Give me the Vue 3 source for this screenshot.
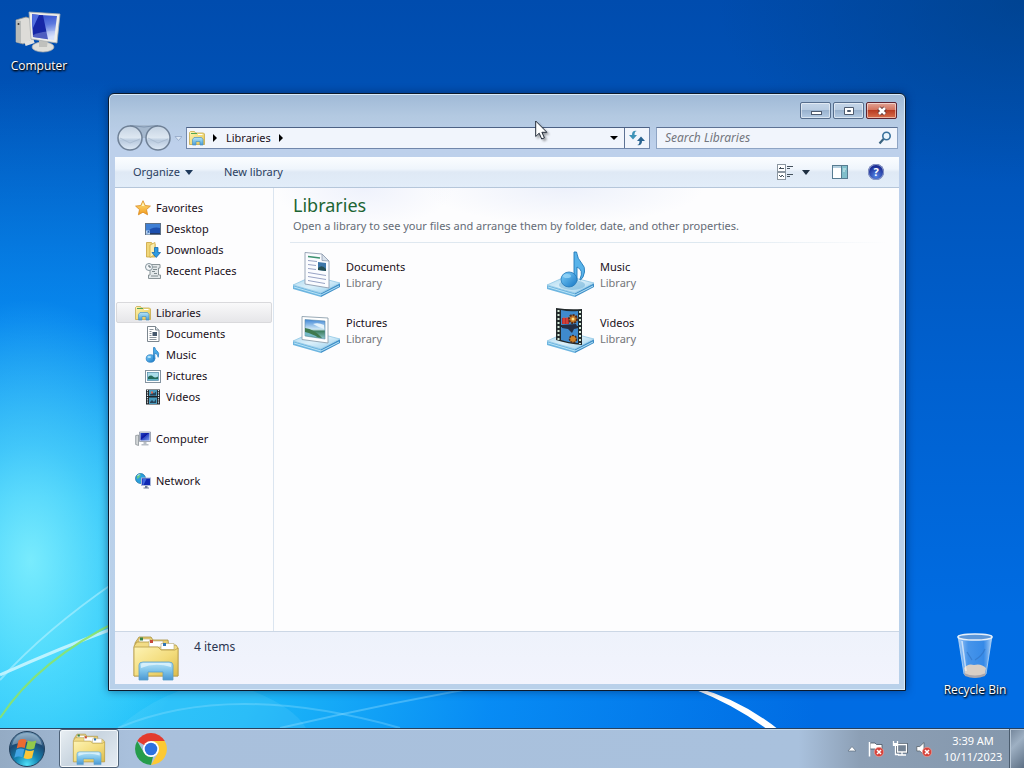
<script setup>
import { ref } from 'vue'

const search = ref('')

const groups = [
  {
    title: 'Favorites',
    icon: 'star',
    items: [
      { name: 'Desktop', icon: 'desktop' },
      { name: 'Downloads', icon: 'downloads' },
      { name: 'Recent Places', icon: 'recent' }
    ]
  },
  {
    title: 'Libraries',
    icon: 'folder',
    active: true,
    items: [
      { name: 'Documents', icon: 'document' },
      { name: 'Music', icon: 'note' },
      { name: 'Pictures', icon: 'picture' },
      { name: 'Videos', icon: 'film' }
    ]
  },
  { title: 'Computer', icon: 'computer', items: [] },
  { title: 'Network', icon: 'network', items: [] }
]

const libraries = [
  { name: 'Documents', icon: 'lib-documents' },
  { name: 'Music', icon: 'lib-music' },
  { name: 'Pictures', icon: 'lib-pictures' },
  { name: 'Videos', icon: 'lib-videos' }
]
</script>

<template>
  <div class="desktop">
    <!-- shared icon shapes -->
    <svg class="sprite" aria-hidden="true">
      <defs>
        <linearGradient id="gFolder" x1="0" y1="0" x2="1" y2="1">
          <stop offset="0" stop-color="#fdf3b4" />
          <stop offset="0.55" stop-color="#f3dc7c" />
          <stop offset="1" stop-color="#dcbb4c" />
        </linearGradient>
        <linearGradient id="gStand" x1="0" y1="0" x2="0" y2="1">
          <stop offset="0" stop-color="#b9e3f6" />
          <stop offset="0.5" stop-color="#7cc3ea" />
          <stop offset="1" stop-color="#4a97d2" />
        </linearGradient>
        <linearGradient id="gScreen" x1="0" y1="0" x2="1" y2="1">
          <stop offset="0" stop-color="#2448c8" />
          <stop offset="0.45" stop-color="#0d17a0" />
          <stop offset="0.5" stop-color="#2c48c4" />
          <stop offset="1" stop-color="#7f9cee" />
        </linearGradient>
        <linearGradient id="gPanel" x1="0" y1="0" x2="0.2" y2="1">
          <stop offset="0" stop-color="#2a48cc" />
          <stop offset="0.5" stop-color="#5b78de" />
          <stop offset="1" stop-color="#d9e3fc" />
        </linearGradient>
        <linearGradient id="gNote" x1="0" y1="0" x2="1" y2="1">
          <stop offset="0" stop-color="#7fd0fa" />
          <stop offset="1" stop-color="#1676c4" />
        </linearGradient>
        <linearGradient id="gTray" x1="0" y1="0" x2="1" y2="1">
          <stop offset="0" stop-color="#a5d5ee" />
          <stop offset="0.5" stop-color="#dcf0fa" />
          <stop offset="1" stop-color="#8fcbec" />
        </linearGradient>
        <linearGradient id="gSky" x1="0" y1="0" x2="0" y2="1">
          <stop offset="0" stop-color="#3f86d6" />
          <stop offset="0.5" stop-color="#cfe8f6" />
          <stop offset="0.6" stop-color="#3e8060" />
          <stop offset="1" stop-color="#8ec6ce" />
        </linearGradient>
        <linearGradient id="gStar" x1="0" y1="0" x2="0" y2="1">
          <stop offset="0" stop-color="#ffe884" />
          <stop offset="1" stop-color="#f29a1c" />
        </linearGradient>
        <linearGradient id="gBall" x1="0" y1="0" x2="0" y2="1">
          <stop offset="0" stop-color="#c4d2e2" />
          <stop offset="0.48" stop-color="#dde7f1" />
          <stop offset="0.6" stop-color="#b9cade" />
          <stop offset="1" stop-color="#dfeaf6" />
        </linearGradient>
        <radialGradient id="gOrb" cx="0.5" cy="0.95" r="0.95">
          <stop offset="0" stop-color="#4fe0f8" />
          <stop offset="0.35" stop-color="#1587b4" />
          <stop offset="0.7" stop-color="#1c4a74" />
          <stop offset="1" stop-color="#6f98b8" />
        </radialGradient>
        <linearGradient id="gBin" x1="0" y1="0" x2="1" y2="0">
          <stop offset="0" stop-color="#d8eaff" stop-opacity="0.8" />
          <stop offset="0.3" stop-color="#8dbdf2" stop-opacity="0.5" />
          <stop offset="0.75" stop-color="#6ca8ec" stop-opacity="0.5" />
          <stop offset="1" stop-color="#e0f0ff" stop-opacity="0.8" />
        </linearGradient>
      </defs>

      <symbol id="star" viewBox="0 0 16 16">
        <path d="M8 .7l2.200 4.800 5.200.6-3.900 3.500 1.100 5.200L8 12.200l-4.600 2.600 1.100-5.200L.6 6.100l5.200-.6z" fill="url(#gStar)" stroke="#d98a20" stroke-width=".8" />
        <path d="M8 2.500l1.500 3.600-3 0z" fill="#fff6c0" />
      </symbol>
      <symbol id="desktop" viewBox="0 0 16 16">
        <rect x=".5" y="2.500" width="15" height="11" fill="#1c4fae" stroke="#5f7186" />
        <path d="M1 3h14v4Q7 5 1 12z" fill="#3f7fd4" />
        <path d="M1 12.500h14" stroke="#243a66" />
        <path d="M1 13.500v-4h4v4z" fill="#b9d4f3" />
        <path d="M2 12.500l2-2m-1.500 0h1.500v1.500" stroke="#2458a6" fill="none" stroke-width=".8" />
      </symbol>
      <symbol id="downloads" viewBox="0 0 16 16">
        <path d="M1.500.5h5l1 1.500h2.500v13h-8.500z" fill="#f1d77a" stroke="#c9a23c" stroke-width=".8" />
        <path d="M5 3l5-2.500v12l-5 3z" fill="#fbeeb0" stroke="#cfab45" stroke-width=".8" />
        <path d="M9.500 5.500h3.500v5h2.500l-4.300 5-4.200-5h2.500z" fill="#2d9be2" stroke="#1769ae" stroke-width=".8" />
      </symbol>
      <symbol id="recent" viewBox="0 0 16 16">
        <path d="M5 1.500h10v3.500h-1.500v7h2v3.500H3.500V12H5V7" fill="#e3e8ea" stroke="#8a9498" />
        <path d="M8 4h4M8 6.500h4M7 8.500h3M9 10.500h3M6 13h7" stroke="#7e8a8e" />
        <circle cx="4" cy="4" r="3.500" fill="#f4f7f9" stroke="#84949c" />
        <path d="M4 2v2h2" stroke="#56666e" fill="none" />
      </symbol>
      <symbol id="folder" viewBox="0 0 16 16">
        <path d="M.5 2.500l1-1h4l1 1.500h8l1 1v10.500H.5z" fill="url(#gFolder)" stroke="#c8ab4c" stroke-width=".8" />
        <path d="M2 3.500h6" stroke="#52a552" />
        <path d="M9 4.500h4.500" stroke="#fff" />
        <path d="M3.500 15V9.500l1.500-2h7.500l1.500 2V15h-3v-3.500h-4V15z" fill="url(#gStand)" stroke="#4a93c4" stroke-width=".7" />
      </symbol>
      <symbol id="document" viewBox="0 0 16 16">
        <path d="M2.500.5h8l3.500 3.500v11.500h-11.500z" fill="#fff" stroke="#7c868f" />
        <path d="M10.500.5v3.500H14" fill="#dce3e8" stroke="#7c868f" />
        <path d="M4.500 3.500h4M4.500 5.500h2M4.500 7.500h2M4.500 9.500h2M4.500 11.500h7M4.500 13.500h7" stroke="#8a939b" />
        <rect x="7.500" y="6" width="4.500" height="4" fill="#46586c" />
      </symbol>
      <symbol id="note" viewBox="0 0 16 16">
        <ellipse cx="5.500" cy="11.500" rx="4.300" ry="3.800" fill="url(#gNote)" stroke="#1f77bd" stroke-width=".7" />
        <path d="M8.500.5h1.300q.4 2.300 2.600 3.800t.8 6q-.2-3.300-3.400-4.300v6H8.500z" fill="#48a9e6" stroke="#1f77bd" stroke-width=".7" />
        <ellipse cx="4.300" cy="10" rx="1.700" ry="1" fill="#b6e5fc" />
      </symbol>
      <symbol id="picture" viewBox="0 0 16 16">
        <rect x=".5" y="2.500" width="15" height="12" fill="#fff" stroke="#8493a0" />
        <rect x="2.500" y="4.500" width="11" height="8" fill="#a9dcea" stroke="#4f86a5" stroke-width=".7" />
        <path d="M3 9q3-2.500 5-.5t5 0v3.500H3z" fill="#236a5b" />
        <path d="M3 11h10v1H3z" fill="#5fb2c4" />
      </symbol>
      <symbol id="film" viewBox="0 0 16 16">
        <rect x="1" y=".5" width="14" height="15" fill="#1c2227" />
        <path d="M2.500 1v14M13.500 1v14" stroke="#e3eaee" stroke-width="1.200" stroke-dasharray="1.300 1" />
        <path d="M4 1h8v6H4zM4 8.500h8V15H4z" fill="#4a9bbd" />
        <path d="M5 5.500l3-2 1 1 2-2v4H5zM5 13l2-2 2 2 2-3v4H5z" fill="#27445a" />
        <path d="M6 2.500h2v2H6z" fill="#d96a54" />
      </symbol>
      <symbol id="computer" viewBox="0 0 16 16">
        <path d="M.7 4.500l2.800-.5v10.500l-2.800-1z" fill="#d5d8da" stroke="#7d858b" stroke-width=".7" />
        <path d="M4.500 1h11v9.500h-11z" fill="#dfe5ee" stroke="#8d96a6" stroke-width=".8" />
        <path d="M5.500 2h9v7.500h-9z" fill="url(#gScreen)" />
        <path d="M8.500 11h3v2h2v1.500h-7V13h2z" fill="#b9bfc6" />
      </symbol>
      <symbol id="network" viewBox="0 0 16 16">
        <circle cx="5.500" cy="5.500" r="5" fill="#2ba0dd" stroke="#1b6f9d" stroke-width=".7" />
        <path d="M2 3q2-2 4-1.500l-1 2-1 1.500-2 1zM6.500 5l3 1-2 3-2-1z" fill="#63c98a" />
        <path d="M2.500 2.500l2-1" stroke="#d5f4ff" />
        <rect x="6.500" y="5" width="9" height="7.500" fill="#0e27b2" stroke="#a9b7d8" />
        <path d="M7.500 6h4l-3 6h-1z" fill="#3e67e0" />
        <path d="M10 13h2.500v1.500H14v1H8.500v-1H10z" fill="#6e7c97" />
      </symbol>

      <symbol id="tray-base" viewBox="0 0 48 48">
        <path d="M0 34l28 8v4L0 38z" fill="#6db5e0" />
        <path d="M28 42l19-10v4L28 46z" fill="#3f8fc8" />
        <path d="M0 34l20-9 27 7-19 10z" fill="url(#gTray)" stroke="#8fc6e4" stroke-width=".8" />
        <path d="M1 36l27 8 18-9" fill="none" stroke="#b9e4f7" />
      </symbol>
      <symbol id="lib-documents" viewBox="0 0 48 48">
        <use href="#tray-base" width="48" height="48" />
        <path d="M12 1.500l17 1.500 7 7v27l-24-4z" fill="#fbfcff" stroke="#8f9db0" stroke-width=".9" />
        <path d="M29 3v6.500l7 .5z" fill="#d9e2ec" stroke="#8f9db0" stroke-width=".8" />
        <path d="M15 5.500l12 1.500" stroke="#3d9270" stroke-width="1.600" />
        <path d="M15 9.500l9 1M15 13.500l8 1M15 17.500l8 1M15 21.500l18 3M15 25.500l18 3M15 29.500l17 3" stroke="#98a3c5" />
        <path d="M25 11l8 1v8l-8-1z" fill="#3e77a9" />
        <path d="M25 17q4-4 8 1v2l-8-1z" fill="#254f53" />
      </symbol>
      <symbol id="lib-music" viewBox="0 0 48 48">
        <use href="#tray-base" width="48" height="48" />
        <ellipse cx="25" cy="34" rx="13" ry="5" fill="#6aaed6" opacity=".5" />
        <path d="M27 1h2.500q1 7 5 11t3 9q-1 6-4 8-1 0-.5-1 4-9-3-12v14h-3z" fill="#58b3ea" stroke="#2379b9" stroke-width=".9" />
        <ellipse cx="22" cy="28.500" rx="8" ry="7.500" fill="url(#gNote)" stroke="#2377b7" stroke-width=".8" />
        <ellipse cx="20" cy="25" rx="4" ry="2" fill="#a2dbfa" opacity=".7" />
      </symbol>
      <symbol id="lib-pictures" viewBox="0 0 48 48">
        <use href="#tray-base" width="48" height="48" />
        <path d="M9 9.500l26 1.500v25l-26-3.500z" fill="#fff" stroke="#8fa0ae" stroke-width=".9" />
        <path d="M12 12.500l20 1.500v18l-20-3z" fill="url(#gSky)" stroke="#5d8ba7" stroke-width=".6" />
        <path d="M12 21q9 1 17 10l-8-1-9-2z" fill="#3e794d" />
        <path d="M12 25q8 2 13 5.500l-13-2z" fill="#75bac9" />
        <path d="M20 17q5-2 11 1v4q-6-2-11-5z" fill="#e5f3fb" />
      </symbol>
      <symbol id="lib-videos" viewBox="0 0 48 48">
        <use href="#tray-base" width="48" height="48" />
        <path d="M9 1q13 2 26 1v36q-14-1-26-5z" fill="#22292b" />
        <path d="M11.500 3v30M33 4v33" stroke="#d4ead8" stroke-width="2" stroke-dasharray="2 2" />
        <path d="M14 3q8 2 17 1v15q-9 1-17-1zM14 20q8 2 17 1v15q-9 0-17-3z" fill="#3f8ace" />
        <path d="M15 11h7v6h-7z" fill="#b92c30" />
        <path d="M17 10v7M20 10v7" stroke="#e5543f" />
        <circle cx="26" cy="12" r="4" fill="#c27626" stroke="#542c1b" stroke-width="2" stroke-dasharray="2 1" />
        <circle cx="26" cy="12" r="1.500" fill="#ffe086" />
        <path d="M15 18l14-1 2 4-4 1-2 4-4-4-6-1z" fill="#242d43" />
        <circle cx="26" cy="32" r="3.500" fill="#ce8126" stroke="#4c2c1c" stroke-width="1.500" stroke-dasharray="2 1" />
      </symbol>

      <symbol id="folder-big" viewBox="0 0 48 48">
        <path d="M3 9l4-6h12l2 3h15l1 7H3z" fill="#e9ce70" stroke="#a68f42" stroke-width=".8" />
        <path d="M7 5h11v5H7z" fill="#fff" stroke="#b4a876" stroke-width=".6" />
        <rect x="8" y="3.500" width="3" height="3" fill="#378548" />
        <path d="M2 12l3-4h13l2 3h24l2 3v28H2z" fill="#f2dc85" stroke="#b19745" stroke-width=".8" />
        <path d="M17 7h14v6H17z" fill="#fff" stroke="#b4a876" stroke-width=".6" />
        <rect x="18" y="6" width="3" height="3" fill="#c6493a" />
        <path d="M29 9.500h13v6H29z" fill="#fff" stroke="#b4a876" stroke-width=".6" />
        <rect x="31" y="9" width="3" height="3" fill="#2f75b4" />
        <path d="M2 13h24l3 3h14l3-2v28H2z" fill="url(#gFolder)" stroke="#b89d46" stroke-width=".8" />
        <path d="M7 46V31q0-3 4-3h26q4 0 4 3v15H31v-8H16v8z" fill="url(#gStand)" stroke="#5b9fc9" stroke-width=".8" />
        <path d="M9 34q14-6 30-1v-2q0-2-2-2H11q-2 0-2 2z" fill="#dff4fc" opacity=".8" />
      </symbol>
      <symbol id="pc-big" viewBox="0 0 48 44">
        <path d="M1 10l10-3 6 2v21l-9 4-7-2z" fill="#dddcd8" stroke="#8d918f" stroke-width=".8" />
        <path d="M1 10l5 1v22l-5-1z" fill="#b8bbb9" />
        <circle cx="3.500" cy="14" r="1" fill="#333" />
        <path d="M10 34l9-3" stroke="#e1e1df" stroke-width="4" />
        <ellipse cx="28" cy="37" rx="11" ry="5" fill="#dfdfda" stroke="#aaa" stroke-width=".7" />
        <path d="M24 29h9l-1 8h-8z" fill="#c0c1bd" />
        <path d="M14 2l31 2-3 29-26-4z" fill="#eeeeeb" stroke="#a8adaf" stroke-width=".8" />
        <path d="M17 4.500l25 1.500-3 24-21-3z" fill="url(#gPanel)" />
        <path d="M17 4.500l11 .7 5 24-15-2.200z" fill="#1526a6" />
        <path d="M17 4.500l7 .4-6.500 14z" fill="#526fe0" />
        <path d="M18 25q9-4 22-4l-1 9-21-3z" fill="#d7e1fc" opacity=".3" />
      </symbol>
      <symbol id="bin" viewBox="0 0 40 48">
        <path d="M3 4h34l-6 38q-11 6-22 0z" fill="url(#gBin)" stroke="#b5d5f5" stroke-width=".8" />
        <path d="M9 36q4-5 10-3 7-2 12 3l-1 6q-10 5-20 0z" fill="#d9cfc5" />
        <path d="M9 41q11 5 22 0l-1 3q-10 4-20 0z" fill="#a9a6ad" />
        <path d="M30 17q-3 7-10 11M12 20l5 8" fill="none" stroke="#2f6fc0" stroke-width="1.200" opacity=".6" />
        <ellipse cx="20" cy="5" rx="17" ry="3" fill="#5c97d9" stroke="#e6f0fa" stroke-width="1.500" />
        <path d="M7 9l4 30" stroke="#fff" stroke-width="1.500" opacity=".6" />
      </symbol>
    </svg>

    <!-- wallpaper light streaks -->
    <svg class="streaks" viewBox="0 0 1024 768" preserveAspectRatio="none" aria-hidden="true">
      <path d="M0 675Q60 648 120 626" stroke="#e0fbff" stroke-width="3" opacity=".75" fill="none" />
      <path d="M0 680Q45 630 115 582" stroke="#c6f6ff" stroke-width="2" opacity=".5" fill="none" />
      <path d="M0 718Q38 660 120 620" stroke="#8be36c" stroke-width="2" opacity=".9" fill="none" />
      <path d="M118 728Q230 680 400 728" stroke="#9fe6ff" stroke-width="2" opacity=".3" fill="none" />
      <path d="M280 728Q400 700 520 680" stroke="#8fdcff" stroke-width="2" opacity=".4" fill="none" />
      <path d="M118 728Q160 690 220 680Q290 700 306 728z" fill="#9feaff" opacity=".12" />
      <path d="M694 688Q740 700 780 732L772 732Q740 706 694 688z" fill="#fff" stroke="#fff" stroke-width="2" />
    </svg>

    <button class="shortcut shortcut-pc" type="button">
      <svg class="shortcut-pc-icon"><use href="#pc-big" /></svg>
      <span>Computer</span>
    </button>
    <button class="shortcut shortcut-bin" type="button">
      <svg class="shortcut-bin-icon"><use href="#bin" /></svg>
      <span>Recycle Bin</span>
    </button>

    <main class="window">
      <div class="titlebar">
        <button class="win-btn" type="button" aria-label="Minimize">
          <svg width="14" height="12" viewBox="0 0 14 12"><rect x="2.500" y="6.500" width="10" height="3" fill="#fff" stroke="#4d5a6e" /></svg>
        </button>
        <button class="win-btn" type="button" aria-label="Maximize">
          <svg width="14" height="12" viewBox="0 0 14 12">
            <path d="M2.500 2.500h9v7h-9zM5.500 5.500v1h3v-1z" fill="#fff" fill-rule="evenodd" stroke="#4d5a6e" />
          </svg>
        </button>
        <button class="win-btn close" type="button" aria-label="Close">
          <svg width="14" height="12" viewBox="0 0 14 12">
            <path d="M4 3l6 6m0-6l-6 6" stroke="#5e3434" stroke-width="4.500" />
            <path d="M4 3l6 6m0-6l-6 6" stroke="#fff" stroke-width="2.600" />
          </svg>
        </button>
      </div>

      <div class="navrow">
        <button class="travel" type="button" aria-label="Back and forward">
          <svg width="66" height="28" viewBox="0 0 66 28">
            <path d="M14 1h28v7q-6 0-7 6h-12q0-5-9-6z" fill="#a5b8ce" />
            <path d="M14 1.500q14 3 28 0" fill="none" stroke="#8196b0" />
            <circle cx="14" cy="14" r="12" fill="url(#gBall)" stroke="#6f8096" stroke-width="1.500" />
            <circle cx="42" cy="14" r="12" fill="url(#gBall)" stroke="#6f8096" stroke-width="1.500" />
            <path d="M4 14l10 5 10-4M32 14l10 5 10-4" fill="none" stroke="#9eb1c7" opacity=".6" />
            <path d="M59 12.500h7l-3.500 4z" fill="#dbe7f5" stroke="#91a5c4" stroke-width=".8" />
          </svg>
        </button>
        <div class="address">
          <svg class="icon"><use href="#folder" /></svg>
          <svg class="crumb-arrow" width="4" height="8" viewBox="0 0 4 8"><path d="M0 0l4 4-4 4z" /></svg>
          <a class="crumb" href="#">Libraries</a>
          <svg class="crumb-arrow" width="4" height="8" viewBox="0 0 4 8"><path d="M0 0l4 4-4 4z" /></svg>
          <button class="history" type="button" aria-label="Previous locations">
            <svg width="8" height="4" viewBox="0 0 8 4"><path d="M0 0h8l-4 4z" /></svg>
          </button>
          <button class="refresh" type="button" aria-label="Refresh">
            <svg width="16" height="16" viewBox="0 0 16 16">
              <path d="M8 1Q5.500 1 5.500 5H8L4 9.500 0 5h3Q3 0 8 1z" fill="#3e93b8" />
              <path d="M8 15q2.500 0 2.500-4H8l4-4.500L16 11h-3q0 5-5 4z" fill="#2a6390" />
            </svg>
          </button>
        </div>
        <label class="search">
          <input v-model="search" type="text" placeholder="Search Libraries" aria-label="Search Libraries" />
          <svg width="14" height="14" viewBox="0 0 14 14">
            <circle cx="8.500" cy="5" r="3.700" fill="#eaf5fc" stroke="#38719c" stroke-width="1.600" />
            <path d="M5.500 8L1.500 12.500" stroke="#38627f" stroke-width="2.200" />
          </svg>
        </label>
      </div>

      <div class="commands">
        <button class="cmd" type="button">
          Organize
          <svg width="8" height="5" viewBox="0 0 8 5"><path d="M0 0h8l-4 5z" fill="#1e395b" /></svg>
        </button>
        <button class="cmd new-lib" type="button">New library</button>
        <button class="cmd views" type="button" aria-label="Change your view">
          <svg width="16" height="16" viewBox="0 0 16 16">
            <rect x=".5" y=".5" width="8" height="7" fill="#fff" stroke="#8b96a0" />
            <rect x=".5" y="8.500" width="8" height="7" fill="#fff" stroke="#8b96a0" />
            <path d="M2 4.500h5M3.500 3v2M2 11l2 2 1-2 2 2M10 2.500h6M10 4.500h3M10 10.500h6M10 12.500h3" stroke="#45525d" fill="none" />
          </svg>
        </button>
        <button class="cmd more" type="button" aria-label="More options">
          <svg width="8" height="5" viewBox="0 0 8 5"><path d="M0 0h8l-4 5z" fill="#1e2e40" /></svg>
        </button>
        <button class="cmd preview" type="button" aria-label="Show the preview pane">
          <svg width="16" height="14" viewBox="0 0 16 14">
            <rect x=".5" y=".5" width="15" height="13" fill="#fff" stroke="#577c91" />
            <path d="M1 2h9" stroke="#b4cfdf" stroke-width="2" />
            <rect x="10" y="1" width="5" height="12" fill="#80bfcb" />
            <path d="M9.500 1v12" stroke="#577c91" />
            <path d="M11 4h3M11 6h2" stroke="#d5eff2" />
          </svg>
        </button>
        <button class="cmd help" type="button" aria-label="Get help">?</button>
      </div>

      <div class="body">
        <nav class="sidebar">
          <div v-for="group in groups" :key="group.title" class="group">
            <a href="#" class="row" :class="{ active: group.active }">
              <svg class="icon"><use :href="'#' + group.icon" /></svg>
              <span>{{ group.title }}</span>
            </a>
            <a v-for="item in group.items" :key="item.name" href="#" class="row child">
              <svg class="icon"><use :href="'#' + item.icon" /></svg>
              <span>{{ item.name }}</span>
            </a>
          </div>
        </nav>

        <section class="content">
          <header class="heading">
            <h1>Libraries</h1>
            <p>Open a library to see your files and arrange them by folder, date, and other properties.</p>
          </header>
          <div class="tiles">
            <a v-for="lib in libraries" :key="lib.name" href="#" class="tile">
              <svg class="tile-icon"><use :href="'#' + lib.icon" /></svg>
              <span class="tile-text">
                <span>{{ lib.name }}</span>
                <span class="kind">Library</span>
              </span>
            </a>
          </div>
        </section>
      </div>

      <footer class="details">
        <svg class="details-icon"><use href="#folder-big" /></svg>
        <span>4 items</span>
      </footer>
    </main>

    <footer class="taskbar">
      <button class="start" type="button" aria-label="Start">
        <svg width="38" height="38" viewBox="0 0 38 38">
          <circle cx="19" cy="19" r="17.500" fill="url(#gOrb)" stroke="#23405c" />
          <path d="M4 15Q7 3 19 3t15 12q-14-6-30 0z" fill="#d8e9f3" opacity=".4" />
          <path d="M10.500 10.500q4-2.500 8-.5l-1.800 8q-4-1.800-8 .5z" fill="#ed6b32" />
          <path d="M19.800 10.600q4 2 8.500 0l-2 8q-4 2-8.300 0z" fill="#93c94b" />
          <path d="M8.300 19.800q4-2.300 8-.5l-2 8q-4-1.700-8 .5z" fill="#42a4e4" />
          <path d="M17.600 19.900q4 2 8.400 0l-2 8q-4.500 2-8.400 0z" fill="#fbc637" />
        </svg>
      </button>
      <button class="task" type="button" aria-label="Windows Explorer">
        <svg class="task-icon"><use href="#folder-big" /></svg>
      </button>
      <button class="chrome" type="button" aria-label="Google Chrome">
        <svg width="32" height="32" viewBox="0 0 32 32">
          <path d="M16 16L2.200 8A16 16 0 0 1 29.800 8z" fill="#e33b2e" />
          <path d="M16 8h13.800A16 16 0 0 1 16 32l7-12z" fill="#fcc934" />
          <path d="M2.200 8l6.900 12 6.900 4 2-.3L16 32A16 16 0 0 1 2.200 8z" fill="#259c4b" />
          <circle cx="16" cy="16" r="8" fill="#fff" />
          <circle cx="16" cy="16" r="6.300" fill="#2d71df" />
        </svg>
      </button>
      <div class="tray">
        <button class="tray-btn" type="button" aria-label="Show hidden icons">
          <svg width="16" height="16" viewBox="0 0 16 16"><path d="M4 10l4-4.500 4 4.500z" fill="#fff" stroke="#5d6d7e" stroke-width=".7" /></svg>
        </button>
        <button class="tray-btn" type="button" aria-label="Action Center">
          <svg width="16" height="16" viewBox="0 0 16 16">
            <path d="M2 2h5l1.500 1.500H14v6H8.500L7 8H2z" fill="#fff" stroke="#47535f" stroke-width=".8" />
            <path d="M1.500 1v14.500" stroke="#fff" stroke-width="1.500" />
            <circle cx="11" cy="11" r="4.700" fill="#d6433b" stroke="#f3aaa2" stroke-width=".6" />
            <path d="M9 9l4 4m0-4l-4 4" stroke="#fff" stroke-width="1.500" />
          </svg>
        </button>
        <button class="tray-btn" type="button" aria-label="Network status">
          <svg width="16" height="16" viewBox="0 0 16 16">
            <path d="M5.500 3.500h9v7.500h-9z" fill="#748394" stroke="#36424f" stroke-width="2.500" />
            <path d="M5.500 3.500h9v7.500h-9zM6 14h8" fill="#748394" stroke="#fff" stroke-width="1.300" />
            <path d="M10 11v3M1.500 0v4h4V0M3.500 4v9.500H7" fill="none" stroke="#fff" stroke-width="1.300" />
            <path d="M1 2h5v3H1z" fill="#fff" />
          </svg>
        </button>
        <button class="tray-btn" type="button" aria-label="Volume muted">
          <svg width="16" height="16" viewBox="0 0 16 16">
            <path d="M.8 5.500h3L8 1.500v12.500l-4.200-4h-3z" fill="#fff" stroke="#58626b" stroke-width=".8" />
            <circle cx="11" cy="11" r="4.700" fill="#d6433b" stroke="#f3aaa2" stroke-width=".6" />
            <path d="M9 9l4 4m0-4l-4 4" stroke="#fff" stroke-width="1.500" />
          </svg>
        </button>
        <button class="clock" type="button">
          <span>3:39 AM</span>
          <span>10/11/2023</span>
        </button>
        <button class="show-desktop" type="button" aria-label="Show desktop"></button>
      </div>
    </footer>

    <svg class="cursor" width="14" height="20" viewBox="0 0 14 20" aria-hidden="true">
      <path d="M.7 1v15.500l3.500-3.300 2.500 5.800 2.700-1.200-2.500-5.500h5z" fill="#fff" stroke="#222b38" />
    </svg>
  </div>
</template>

<style>
body {
  margin: 0;
}
</style>

<style scoped>
.desktop {
  position: relative;
  height: 100vh;
  min-height: 480px;
  overflow: hidden;
  display: flex;
  flex-direction: column;
  justify-content: flex-end;
  font-family: "Noto Sans", "Open Sans", sans-serif;
  font-size: 11px;
  line-height: 16px;
  color: #1a1020;
  background:
    radial-gradient(ellipse 16% 34% at 3% 73%, rgba(150, 250, 255, 0.75), rgba(130, 240, 255, 0.4) 45%, rgba(110, 240, 255, 0) 100%),
    radial-gradient(ellipse 76% 76% at 4% 86%, #24c9fb 0%, #1cb8f8 28%, rgba(10, 150, 250, 0.75) 58%, rgba(0, 112, 232, 0) 100%),
    radial-gradient(ellipse 30% 24% at 100% 0, rgba(0, 60, 120, 0.5), rgba(0, 60, 120, 0)),
    linear-gradient(180deg, #004cae 0%, #0053b8 18%, #0061d0 50%, #006ce2 80%, #006ce4 100%);
}

.sprite {
  position: absolute;
  width: 0;
  height: 0;
}

.streaks {
  position: absolute;
  inset: 0;
  width: 100%;
  height: 100%;
}

button {
  padding: 0;
  border: 0;
  background: none;
  font: inherit;
  color: inherit;
}

a {
  color: inherit;
  text-decoration: none;
}

svg {
  display: block;
  flex: none;
}

.icon {
  width: 16px;
  height: 16px;
}

.shortcut {
  position: absolute;
  display: flex;
  flex-direction: column;
  align-items: center;
  width: 76px;
  font-family: "Open Sans", "Noto Sans", sans-serif;
  font-size: 12px;
  color: #fff;
  text-shadow: 0 1px 2px #000, 1px 1px 2px #000;
}

.shortcut-pc {
  left: 1px;
  top: 10px;
  gap: 4px;
}

.shortcut-bin {
  right: 11px;
  bottom: 70px;
  gap: 2px;
}

.shortcut-pc-icon {
  width: 48px;
  height: 44px;
}

.shortcut-bin-icon {
  width: 40px;
  height: 48px;
}

.window {
  position: absolute;
  inset: 93px 118px 77px 108px;
  box-sizing: border-box;
  display: flex;
  flex-direction: column;
  padding: 0 6px 6px;
  border: 1px solid #0c1a2c;
  border-radius: 6px 6px 0 0;
  background: linear-gradient(180deg, #9fb9d6 0, #b3c9e1 22px, #bdd0eb 50px, #b9d1ea 100%);
  box-shadow: inset 0 0 0 1px #d9ebfa, 0 0 8px rgba(0, 20, 60, 0.5);
}

.titlebar {
  display: flex;
  justify-content: flex-end;
  align-items: flex-start;
  gap: 2px;
  height: 30px;
  padding: 8px 2px 0 0;
  box-sizing: border-box;
}

.win-btn {
  display: flex;
  align-items: center;
  justify-content: center;
  width: 31px;
  height: 17px;
  border: 1px solid #566d8c;
  border-radius: 2px;
  background: linear-gradient(180deg, #c4d5e8 0%, #b8cbe1 48%, #99b2ce 50%, #b5cce4 100%);
  box-shadow: inset 0 0 0 1px rgba(255, 255, 255, 0.5);
}

.win-btn.close {
  border-color: #5b2330;
  background: linear-gradient(180deg, #e2a496 0%, #d3705a 48%, #b93c22 50%, #d86f4c 100%);
}

.navrow {
  display: flex;
  align-items: center;
  height: 28px;
  margin-bottom: 5px;
  padding-right: 1px;
}

.travel {
  margin: 0 4px 0 1px;
}

.address {
  flex: 1;
  display: flex;
  align-items: center;
  height: 22px;
  box-sizing: border-box;
  padding-left: 2px;
  border: 1px solid #7187ab;
  border-top-color: #4c6184;
  background: #f1f5fc;
}

.crumb-arrow {
  margin: 0 9px 0 8px;
}

.history {
  margin: 0 6px 0 auto;
}

.refresh {
  display: flex;
  align-items: center;
  justify-content: center;
  align-self: stretch;
  width: 25px;
  border-left: 1px solid #5d7294;
}

.search {
  display: flex;
  align-items: center;
  width: 32%;
  max-width: 242px;
  height: 22px;
  box-sizing: border-box;
  margin-left: 6px;
  padding: 0 5px 0 8px;
  border: 1px solid #8ea4c4;
  border-top-color: #5d7294;
  background: #f1f5fc;
  font-size: 12px;
}

.search input {
  flex: 1;
  min-width: 0;
  padding: 0;
  border: 0;
  outline: 0;
  background: none;
  font: inherit;
}

.search input::placeholder {
  font-style: italic;
  color: #73767e;
  opacity: 1;
}

.commands {
  display: flex;
  align-items: center;
  height: 31px;
  box-sizing: border-box;
  padding: 0 15px 0 18px;
  border-bottom: 1px solid #b5c6da;
  background: linear-gradient(180deg, #fbfdff 0%, #eff5fc 40%, #dfe9f5 50%, #e2edf9 100%);
  color: #2b4060;
}

.cmd {
  display: flex;
  align-items: center;
  gap: 5px;
}

.new-lib {
  margin-left: 31px;
}

.views {
  margin-left: auto;
}

.more {
  margin: 0 22px 0 9px;
}

.preview {
  margin-right: 20px;
}

.help {
  justify-content: center;
  width: 16px;
  height: 16px;
  border-radius: 50%;
  background: radial-gradient(circle at 50% 75%, #5585e5, #1b2e97 65%);
  box-shadow: inset 0 0 0 1px #8d9bc5;
  color: #fff;
  font-weight: 700;
}

.body {
  flex: 1;
  min-height: 0;
  display: flex;
  background: #fdfdfe;
}

.sidebar {
  width: 158px;
  box-sizing: content-box;
  padding-top: 9px;
  border-right: 1px solid #dbe5f0;
}

.group {
  margin-bottom: 21px;
}

.row {
  display: flex;
  align-items: center;
  gap: 5px;
  height: 21px;
  box-sizing: border-box;
  margin: 0 1px;
  padding-left: 18px;
  border: 1px solid transparent;
  border-radius: 2px;
}

.row.child {
  padding-left: 28px;
}

.row.active {
  border-color: #d9d9dc;
  background: linear-gradient(180deg, #f9f9fa, #e6e6e9);
}

.content {
  flex: 1;
  min-width: 0;
  background:
    radial-gradient(ellipse 90px 40px at 90px 0, #eff2fc, rgba(239, 242, 252, 0)),
    radial-gradient(ellipse 140px 36px at 290px 0, #edf1fb, rgba(239, 242, 252, 0));
}

.heading {
  margin: 0 12px 8px 16px;
  padding: 5px 0 8px 3px;
  border-bottom: 1px solid;
  border-image: linear-gradient(90deg, #e0e8f0, #dde8f0 70%, rgba(220, 230, 240, 0)) 1;
}

.heading h1 {
  margin: 0;
  font-size: 18px;
  line-height: 25px;
  font-weight: 400;
  color: #1c6433;
}

.heading p {
  margin: 0;
  color: #646b76;
}

.tiles {
  display: grid;
  grid-template-columns: repeat(auto-fill, 254px);
  gap: 8px 0;
  padding-left: 19px;
}

.tile {
  display: flex;
  align-items: center;
  gap: 5px;
}

.tile-icon {
  width: 48px;
  height: 48px;
}

.tile-text {
  display: flex;
  flex-direction: column;
}

.kind {
  color: #74757a;
}

.details {
  display: flex;
  gap: 14px;
  height: 53px;
  box-sizing: border-box;
  padding-left: 17px;
  border-top: 1px solid #ccd7e5;
  background: linear-gradient(180deg, #eef2fb, #f2f4fd);
  font-size: 12px;
  color: #2b3550;
}

.details-icon {
  width: 48px;
  height: 48px;
  margin-top: 2px;
}

.details span {
  margin-top: 7px;
}

.taskbar {
  position: relative;
  display: flex;
  align-items: center;
  height: 40px;
  box-sizing: border-box;
  border-top: 1px solid #27415f;
  box-shadow: inset 0 1px 0 #c8dcee;
  background: linear-gradient(90deg, #94abc4 0, #a9c0dc 130px, #a9c1dd 78%, #8c9fb5 84%, #8497ac 100%);
}

.start {
  margin-left: 8px;
}

.task {
  display: flex;
  align-items: center;
  justify-content: center;
  width: 60px;
  height: 39px;
  margin-left: 13px;
  box-sizing: border-box;
  border: 1px solid #4e6278;
  border-radius: 3px;
  background: linear-gradient(135deg, #e9eff3, #c9d5e0 45%, #e6edf4);
  box-shadow: inset 0 0 0 1px #f5f9fc;
}

.task-icon {
  width: 34px;
  height: 34px;
}

.chrome {
  margin-left: 16px;
}

.tray {
  display: flex;
  align-items: center;
  align-self: stretch;
  margin-left: auto;
  color: #fff;
}

.tray-btn {
  margin-right: 8px;
}

.clock {
  display: flex;
  flex-direction: column;
  width: 66px;
  align-items: center;
  margin-right: 3px;
}

.show-desktop {
  align-self: stretch;
  width: 15px;
  border-left: 1px solid #4b5c6e;
  background: linear-gradient(135deg, #728499, #9eb0c3 40%, #5d7085);
  box-shadow: inset 1px 1px 0 #b8c7d6;
}

.cursor {
  position: absolute;
  left: 535px;
  top: 120px;
  filter: drop-shadow(2px 2px 1px rgba(0, 0, 0, 0.35));
}
</style>
